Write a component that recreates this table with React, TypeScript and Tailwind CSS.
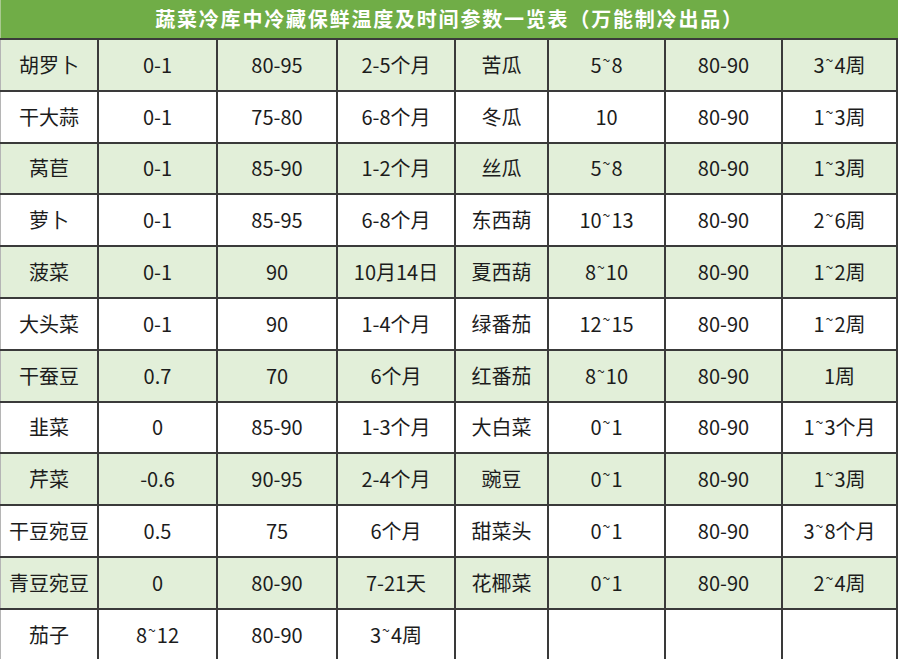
import React from "react";

const rows: string[][] = [
  ["胡罗卜", "0-1", "80-95", "2-5个月", "苦瓜", "5~8", "80-90", "3~4周"],
  ["干大蒜", "0-1", "75-80", "6-8个月", "冬瓜", "10", "80-90", "1~3周"],
  ["莴苣", "0-1", "85-90", "1-2个月", "丝瓜", "5~8", "80-90", "1~3周"],
  ["萝卜", "0-1", "85-95", "6-8个月", "东西葫", "10~13", "80-90", "2~6周"],
  ["菠菜", "0-1", "90", "10月14日", "夏西葫", "8~10", "80-90", "1~2周"],
  ["大头菜", "0-1", "90", "1-4个月", "绿番茄", "12~15", "80-90", "1~2周"],
  ["干蚕豆", "0.7", "70", "6个月", "红番茄", "8~10", "80-90", "1周"],
  ["韭菜", "0", "85-90", "1-3个月", "大白菜", "0~1", "80-90", "1~3个月"],
  ["芹菜", "-0.6", "90-95", "2-4个月", "豌豆", "0~1", "80-90", "1~3周"],
  ["干豆宛豆", "0.5", "75", "6个月", "甜菜头", "0~1", "80-90", "3~8个月"],
  ["青豆宛豆", "0", "80-90", "7-21天", "花椰菜", "0~1", "80-90", "2~4周"],
  ["茄子", "8~12", "80-90", "3~4周", "", "", "", ""],
];

function CellText({ text }: { text: string }) {
  const parts = text.split("~");
  return (
    <span>
      {parts.map((p, i) => (
        <React.Fragment key={i}>
          {i > 0 && (
            <span className="inline-block -translate-y-[7px] text-[14px] mx-[1px]">~</span>
          )}
          {p}
        </React.Fragment>
      ))}
    </span>
  );
}

export default function App() {
  return (
    <div
      className="w-[900px] h-[659px] overflow-hidden bg-white text-[#1c1c1c]"
      style={{ fontFamily: '"Noto Sans CJK SC", "Noto Sans", sans-serif' }}
    >
      <div className="w-[898px] h-[38px] bg-[#70ad47] flex items-center justify-center text-white font-bold text-[20px] tracking-[1.8px] border-l border-l-[#a9c98f]">
        蔬菜冷库中冷藏保鲜温度及时间参数一览表（万能制冷出品）
      </div>
      {rows.map((r, ri) => (
        <div
          key={ri}
          className={`w-[898px] h-[51.8px] grid grid-cols-[99px_119px_120px_118px_93px_117px_117px_115px] border-t-2 border-t-[#3a3a3a] ${
            ri % 2 === 0 && ri !== 11 ? "bg-[#e2efd9]" : "bg-white"
          }`}
        >
          {r.map((c, ci) => (
            <div
              key={ci}
              className={`flex items-center justify-center text-[20px] leading-none border-r-2 border-r-[#3a3a3a] ${
                ci === 0 ? "border-l border-l-[#b5b5b5]" : ""
              }`}
            >
              <CellText text={c} />
            </div>
          ))}
        </div>
      ))}
    </div>
  );
}
